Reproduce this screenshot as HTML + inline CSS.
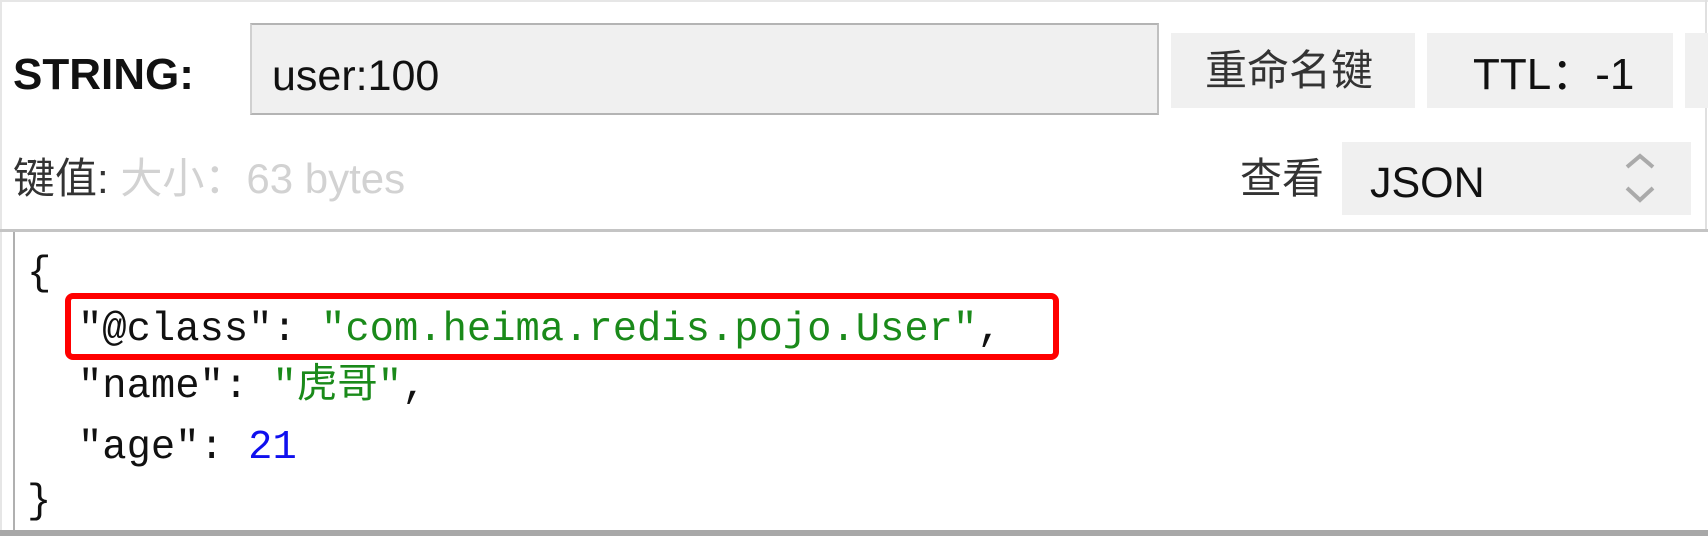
<!DOCTYPE html>
<html><head><meta charset="utf-8"><style>
body{margin:0;width:1708px;height:536px;background:#fff;position:relative;overflow:hidden;font-family:"Liberation Sans","Noto Sans CJK SC",sans-serif;}
.a{position:absolute;}
.ui{font-size:44px;color:#111;line-height:1;}
.code{font-family:"Liberation Mono","Noto Sans CJK SC",monospace;font-size:40.5px;color:#111;white-space:pre;line-height:1;}
</style></head><body>
<div class="a" style="left:0;top:0;width:1708px;height:2px;background:#e6e6e6"></div>
<div class="a" style="left:0;top:0;width:2px;height:536px;background:#e6e6e6"></div>
<div class="a" style="left:1705px;top:0;width:2px;height:232px;background:#e0e0e0"></div>
<div class="a ui" style="left:13px;top:53px;font-weight:bold;font-size:44px">STRING:</div>
<div class="a" style="left:250px;top:23px;width:905px;height:88px;background:#f0f0f0;border:2px solid #b4b4b4;border-left-color:#d0d0d0;border-right-color:#c0c0c0"></div>
<div class="a ui" style="left:272px;top:55px;font-size:43px">user:100</div>
<div class="a" style="left:1171px;top:33px;width:244px;height:75px;background:#f0f0f0"></div>
<div class="a ui" style="left:1205px;top:50px;font-size:42px;color:#333">重命名键</div>
<div class="a" style="left:1427px;top:33px;width:246px;height:75px;background:#f0f0f0"></div>
<div class="a ui" style="left:1473px;top:53px;font-size:44px">TTL：-1</div>
<div class="a" style="left:1685px;top:33px;width:23px;height:75px;background:#f0f0f0"></div>
<div class="a ui" style="left:13px;top:158px;font-size:42px;color:#333">键值: <span style="color:#d2d2d2">大小：63 bytes</span></div>
<div class="a ui" style="left:1240px;top:158px;font-size:42px;color:#333">查看</div>
<div class="a" style="left:1342px;top:142px;width:349px;height:73px;background:#f0f0f0"></div>
<div class="a ui" style="left:1370px;top:162px;font-size:43px">JSON</div>
<svg class="a" style="left:1622px;top:152px" width="36" height="52" viewBox="0 0 36 52"><path d="M5 15 L18 4 L31 15 M5 36 L18 48 L31 36" fill="none" stroke="#aaa" stroke-width="4"/></svg>
<div class="a" style="left:0;top:229px;width:1708px;height:3px;background:#c4c4c4"></div>
<div class="a" style="left:13px;top:232px;width:2px;height:300px;background:#b0b0b0"></div>
<div class="a" style="left:0;top:530px;width:1708px;height:6px;background:#a8a8a8"></div>
<div class="a code" style="left:27px;top:254px">{</div>
<div class="a code" style="left:78px;top:310px">"@class": <span style="color:#1a8a1a">"com.heima.redis.pojo.User"</span>,</div>
<div class="a code" style="left:78px;top:367px">"name": <span style="color:#1a8a1a">"虎哥"</span>,</div>
<div class="a code" style="left:78px;top:428px">"age": <span style="color:#1010ee">21</span></div>
<div class="a code" style="left:27px;top:482px">}</div>
<div class="a" style="left:65px;top:293px;width:982px;height:55px;border:6px solid #f00;border-radius:8px"></div>
</body></html>
